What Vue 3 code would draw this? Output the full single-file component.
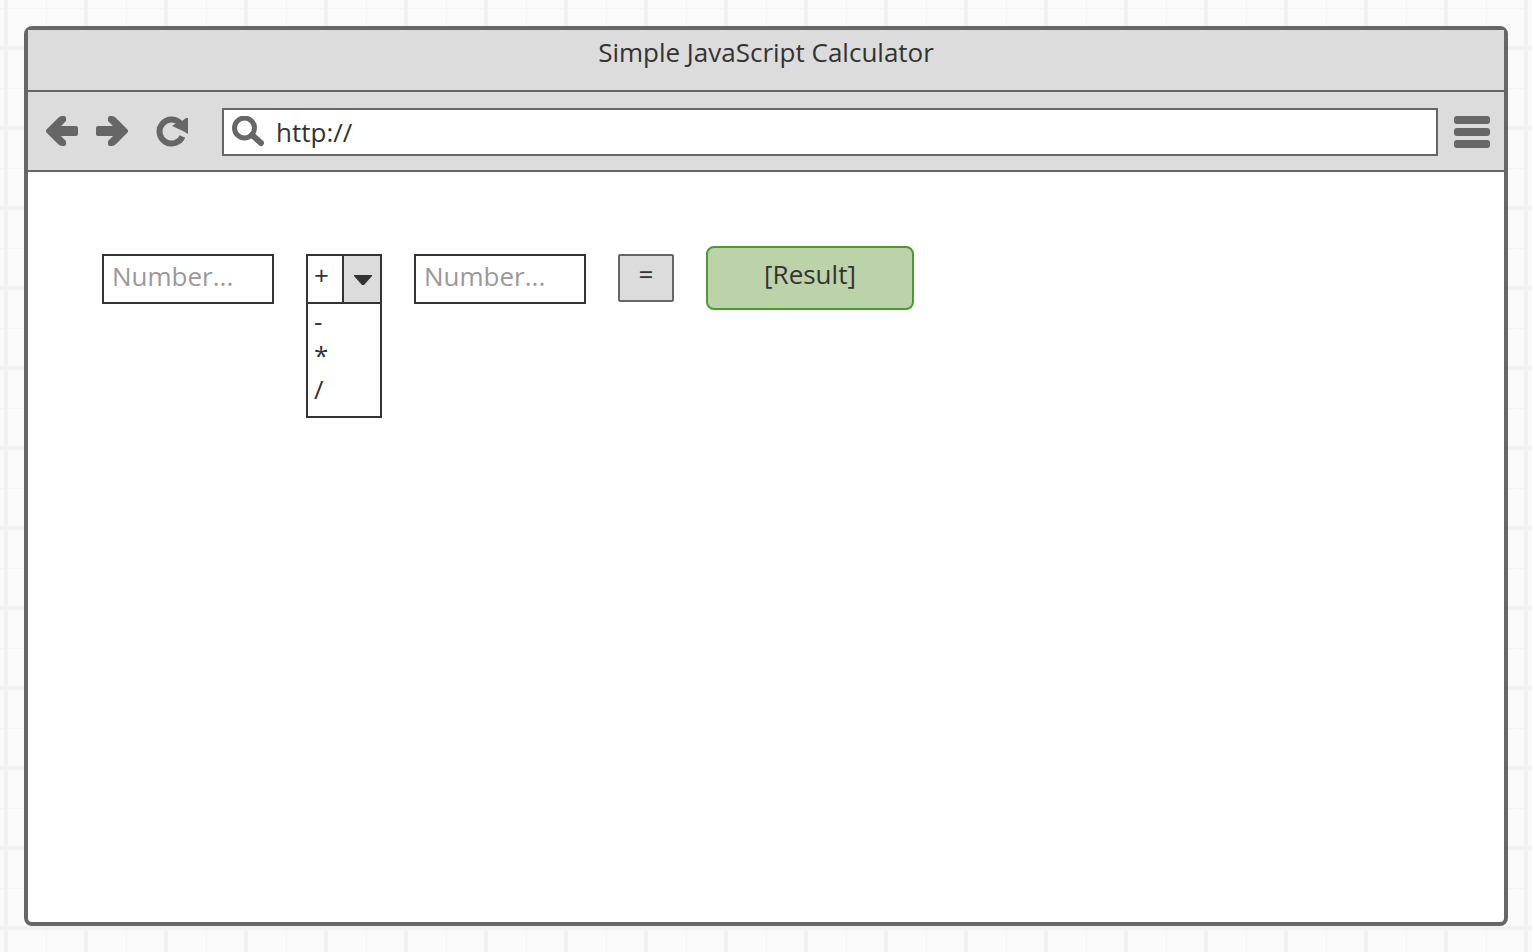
<script setup>
import { ref } from 'vue'

const address = ref('http://')
const first = ref('')
const second = ref('')
const operator = ref('+')
const operators = ['+', '-', '*', '/']
const result = ref('[Result]')

function calculate() {
  const a = parseFloat(first.value)
  const b = parseFloat(second.value)
  if (Number.isNaN(a) || Number.isNaN(b)) return
  const values = { '+': a + b, '-': a - b, '*': a * b, '/': a / b }
  result.value = String(values[operator.value])
}
</script>

<template>
  <div class="canvas">
    <main class="window">
      <header class="title-bar">
        <h1>Simple JavaScript Calculator</h1>
      </header>

      <nav class="toolbar">
        <button class="icon-button" type="button" aria-label="Back">
          <svg width="32" height="32" viewBox="0 0 32 32">
            <path d="M0 14L12 2Q14 0 16 0H18Q20 0 20 2V5L15 10H30Q32 10 32 12V18Q32 20 30 20H15L20 25V28Q20 30 18 30H16Q14 30 12 28L0 16Z" />
          </svg>
        </button>
        <button class="icon-button forward" type="button" aria-label="Forward">
          <svg width="32" height="32" viewBox="0 0 32 32">
            <path d="M32 14L20 2Q18 0 16 0H14Q12 0 12 2V5L17 10H2Q0 10 0 12V18Q0 20 2 20H17L12 25V28Q12 30 14 30H16Q18 30 20 28L32 16Z" />
          </svg>
        </button>
        <button class="icon-button reload" type="button" aria-label="Reload">
          <svg width="32" height="32" viewBox="0 0 32 32">
            <path class="ring" d="M24 7A12 12 0 1 0 26.500 20.500" />
            <path d="M32 2V18L27 15L16 10L19 8L22 6L26 5L30 2Z" />
          </svg>
        </button>
        <label class="address">
          <svg width="32" height="32" viewBox="0 0 32 32" aria-hidden="true">
            <circle cx="12.500" cy="12" r="10" />
            <path d="M20 19L29 27" />
          </svg>
          <input v-model="address" type="text" aria-label="Address" />
        </label>
        <button class="icon-button menu" type="button" aria-label="Menu">
          <svg width="36" height="32" viewBox="0 0 36 32">
            <rect width="36" height="8" rx="3" />
            <rect y="12" width="36" height="8" rx="3" />
            <rect y="24" width="36" height="8" rx="3" />
          </svg>
        </button>
      </nav>

      <form class="calculator" @submit.prevent="calculate">
        <input v-model="first" class="number" type="text" placeholder="Number..." aria-label="First number" />
        <div class="operator">
          <select v-model="operator" aria-label="Operator">
            <option v-for="o in operators" :key="o" :value="o">{{ o }}</option>
          </select>
          <span class="arrow" aria-hidden="true">
            <svg width="18" height="10" viewBox="0 0 18 10">
              <path d="M0 0H18V1L10 10H8L0 1Z" />
            </svg>
          </span>
          <ul class="choices" role="listbox" aria-label="Operators">
            <li v-for="o in operators.slice(1)" :key="o" role="option" @click="operator = o">{{ o }}</li>
          </ul>
        </div>
        <input v-model="second" class="number" type="text" placeholder="Number..." aria-label="Second number" />
        <button class="equals" type="submit">=</button>
        <output class="result">{{ result }}</output>
      </form>
    </main>
  </div>
</template>

<style>
body {
  margin: 0;
}
</style>

<style scoped>
* {
  box-sizing: border-box;
}

.canvas {
  display: flex;
  min-height: 100vh;
  padding: 26px 24px;
  color: #333;
  font: 26px/36px "Open Sans", "Noto Sans", sans-serif;
  background-color: #fafafa;
  background-image:
    linear-gradient(90deg, #f1f1f1 4px, transparent 4px),
    linear-gradient(#f1f1f1 4px, transparent 4px),
    linear-gradient(90deg, #f4f4f4 1px, transparent 1px),
    linear-gradient(#f4f4f4 1px, transparent 1px);
  background-size: 80px 80px;
  background-position: 4px 0, 0 46px, 46px 0, 0 8px;
}

.window {
  flex: 1;
  min-width: 0;
  border: 4px solid #666;
  border-radius: 8px;
  background: #fff;
}

.title-bar {
  height: 62px;
  padding-top: 4px;
  border-bottom: 2px solid #666;
  background: #dcdcdc;
  text-align: center;
}

h1 {
  margin: 0;
  font: inherit;
}

input,
select,
button {
  margin: 0;
  border-radius: 0;
  color: inherit;
  font: inherit;
  outline: none;
}

.toolbar {
  display: flex;
  align-items: center;
  height: 80px;
  padding: 2px 14px 0 18px;
  border-bottom: 2px solid #666;
  background: #dcdcdc;
}

.icon-button {
  display: flex;
  padding: 0;
  border: 0;
  background: none;
  fill: #666;
}

.forward {
  margin-left: 18px;
}

.reload {
  margin-left: 28px;
}

.ring {
  fill: none;
  stroke: #666;
  stroke-width: 6;
}

.address {
  display: flex;
  flex: 1;
  align-items: center;
  height: 48px;
  margin: 0 16px 0 34px;
  padding: 0 8px;
  border: 2px solid #666;
  background: #fff;
}

.address svg {
  flex: none;
  fill: none;
  stroke: #666;
  stroke-width: 6;
  stroke-linecap: round;
}

.address circle {
  stroke-width: 5;
}

.address input {
  flex: 1;
  min-width: 0;
  height: 36px;
  padding: 0 12px;
  border: 0;
  background: none;
}

.calculator {
  display: flex;
  align-items: flex-start;
  gap: 32px;
  padding: 82px 74px;
}

.number {
  width: 172px;
  height: 50px;
  padding: 2px 8px 8px;
  border: 2px solid #333;
  background: #fff;
}

.number::placeholder {
  color: #999;
  opacity: 1;
}

.operator {
  position: relative;
  width: 76px;
}

.operator select {
  display: block;
  width: 100%;
  height: 50px;
  padding: 0 38px 8px 6px;
  border: 2px solid #333;
  background: #fff;
  appearance: none;
}

.arrow {
  position: absolute;
  top: 2px;
  right: 2px;
  display: flex;
  align-items: center;
  justify-content: center;
  width: 38px;
  height: 46px;
  padding: 2px 0 0 2px;
  border-left: 2px solid #333;
  background: #dcdcdc;
  fill: #333;
  pointer-events: none;
}

.choices {
  position: absolute;
  top: 48px;
  left: 0;
  width: 100%;
  margin: 0;
  padding: 0 6px 10px;
  border: 2px solid #333;
  background: #fff;
  line-height: 34px;
  list-style: none;
}

.equals {
  width: 56px;
  height: 48px;
  padding: 0 0 8px;
  border: 2px solid #666;
  border-radius: 2px;
  background: #dcdcdc;
}

.result {
  width: 208px;
  height: 64px;
  margin-top: -8px;
  padding-top: 8px;
  border: 2px solid #4b9a32;
  border-radius: 8px;
  background: #bcd3aa;
  text-align: center;
}
</style>
